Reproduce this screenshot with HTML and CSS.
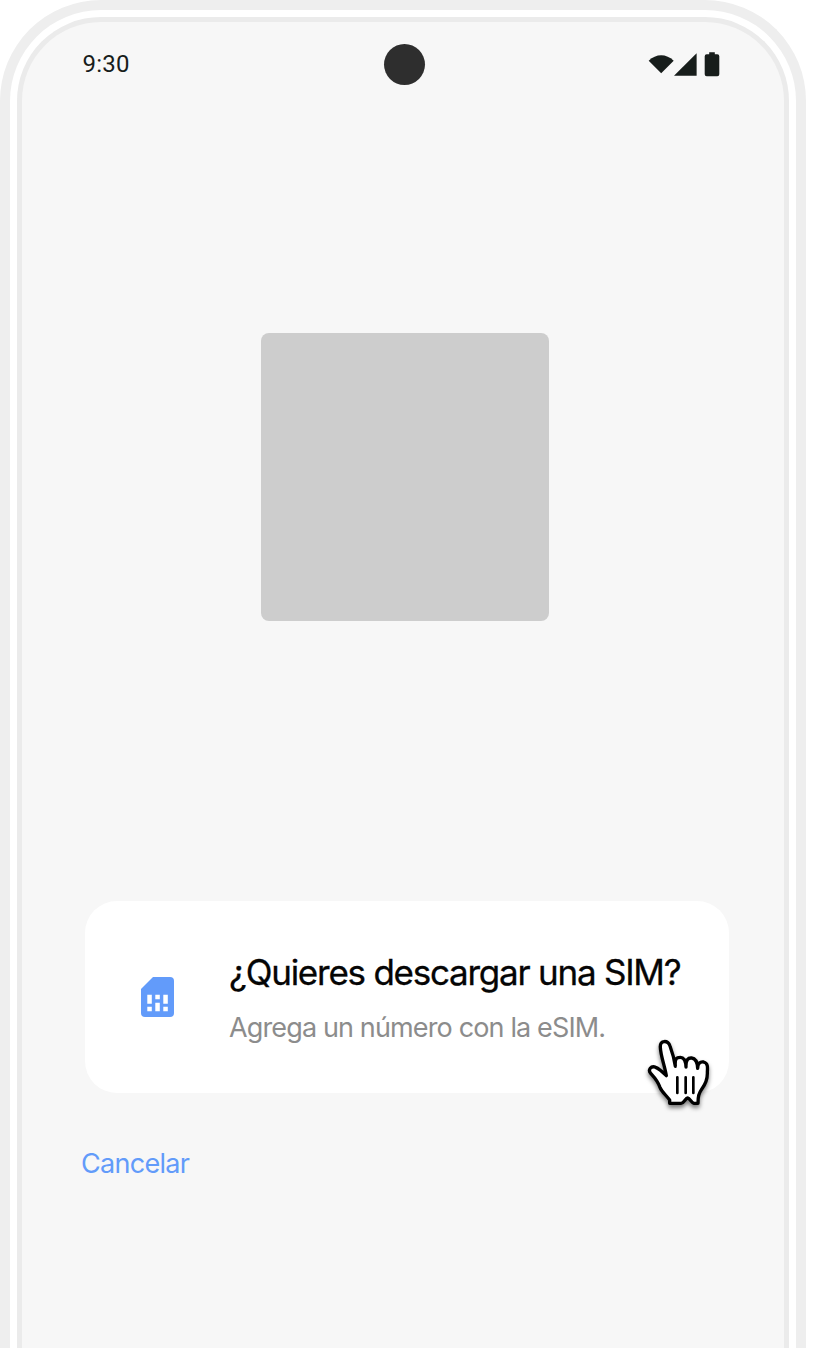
FILE: index.html
```html
<!DOCTYPE html>
<html lang="es">
<head>
<meta charset="utf-8">
<title>Descargar SIM</title>
<link rel="stylesheet" href="styles.css">
</head>
<body>
<div class="phone">
  <main class="screen">
    <header class="status">
      <span class="time">9:30</span>
      <span class="camera"></span>
      <svg class="indicators" viewBox="0 0 72 26" aria-hidden="true">
        <path d="M0.7 9.7C8 2.3 18.300 2.300 25.700 9.700L13.200 22.200Z"/>
        <path d="M26 24.700L48.600 2.200V24.700Z"/>
        <path d="M61.200 1.200H66.800V3.300H69.300Q71.300 3.300 71.300 5.300V23.300Q71.300 25.300 69.300 25.300H58.700Q56.700 25.300 56.700 23.300V5.300Q56.700 3.300 58.700 3.300H61.200Z"/>
      </svg>
    </header>
    <div class="placeholder"></div>
    <section class="card">
      <svg class="sim" viewBox="0 0 33 40" aria-hidden="true">
        <path fill="#629bfa" d="M12 0H29Q33 0 33 4V36Q33 40 29 40H4Q0 40 0 36V12Z"/>
        <path fill="#fff" d="M6.300 17.700h4.500v9h-4.500zM14.300 17.700h4.500v4.500h-4.500zM22.300 17.700h4.500v9h-4.500zM6.300 29.700h4.500v4.500h-4.500zM14.300 25.700h4.500v8.500h-4.500zM22.300 29.700h4.500v4.500h-4.500z"/>
      </svg>
      <div class="copy">
        <h1 class="title">¿Quieres descargar una SIM?</h1>
        <p class="subtitle">Agrega un número con la eSIM.</p>
      </div>
      <svg class="hand" viewBox="0 0 270 270" aria-hidden="true">
        <path class="hand-outline" d="M104 217V207C91 190 80 182 75 169C68 149 58 139 47 127C38 117 48 103 62 109C73 113 83 123 94 134C90 107 77 75 76 49C74 26 99 27 105 45C112 64 118 86 121 106C119 81 125 79 136 79C146 79 152 87 153 108C152 87 159 80 170 81C181 82 187 91 188 112C188 97 196 91 206 93C219 96 218 109 217 123C218 143 213 157 201 173C191 188 189 196 189 217H177C170 216 165 202 158 201C151 201 147 217 138 217Z"/>
        <path class="hand-lines" d="M127 139V186M152 139V186M175 139V186"/>
      </svg>
    </section>
    <a class="cancel">Cancelar</a>
  </main>
</div>
</body>
</html>
```
FILE: styles.css
```css
* { box-sizing: border-box; }
body { margin: 0; background: #fff; }
.phone {
  width: 806px;
  height: 1348px;
  padding: 7px 7px 0;
  border: 10px solid #eee;
  border-bottom: 0;
  border-radius: 101px 101px 0 0;
  background: #fff;
}
.screen {
  height: 100%;
  border: 5px solid #ebebeb;
  border-bottom: 0;
  border-radius: 84px 84px 0 0;
  background: #f7f7f7;
  font-family: Inter, "Liberation Sans", sans-serif;
}
.status {
  display: grid;
  grid-template-columns: 301.5px 41px 1fr;
  align-items: center;
  height: 41px;
  margin: 21.5px 64px 0 60px;
}
.time { padding-left: 0.5px; font: 24px/28px Roboto, sans-serif; letter-spacing: 0.2px; color: #171d1b; }
.camera { width: 41px; height: 41px; border-radius: 50%; background: #2e2e2e; }
.indicators { width: 72px; height: 26px; justify-self: end; fill: #171d1b; }
.placeholder {
  width: 288px;
  height: 288px;
  margin: 248.5px 0 0 239.4px;
  border-radius: 8px;
  background: #cdcdcd;
}
.card {
  position: relative;
  display: flex;
  width: 644px;
  height: 192px;
  margin: 280px 0 0 63px;
  padding: 0 0 0 56px;
  border-radius: 32px;
  background: #fff;
}
.sim { width: 33px; height: 40px; margin-top: 76px; }
.copy { margin: 49px 0 0 55px; white-space: nowrap; }
.title {
  margin: 0;
  font-size: 35px;
  line-height: 44px;
  font-weight: 400;
  letter-spacing: -1.24px;
  color: #050505;
  -webkit-text-stroke: 0.3px #050505;
}
.subtitle { margin: 17px 0 0; font-size: 27px; line-height: 34px; letter-spacing: -0.86px; color: #8c8c8c; }
.hand {
  position: absolute;
  left: 549.5px;
  top: 129.5px;
  width: 90px;
  height: 90px;
  filter: drop-shadow(0 3px 2px rgba(0, 0, 0, 0.5));
}
.hand-outline { fill: #fff; stroke: #000; stroke-width: 10; stroke-linejoin: round; }
.hand-lines { fill: none; stroke: #000; stroke-width: 8; stroke-linecap: round; }
.cancel {
  display: block;
  width: max-content;
  margin: 54px 0 0 59px;
  font-size: 27px;
  line-height: 34px;
  letter-spacing: -0.7px;
  color: #629bfa;
}
```
